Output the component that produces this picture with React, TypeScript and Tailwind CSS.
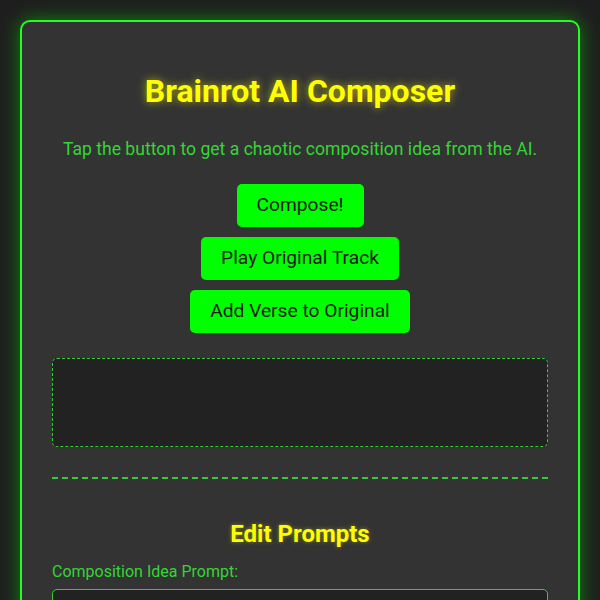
import React from "react";

export default function App() {
  return (
    <div className="min-h-[600px] bg-[#1e1e1e] p-5 font-['Roboto',sans-serif]">
      <div className="rounded-[10px] border-2 border-[#22ff22] bg-[#333333] px-[30px] pt-[30px] pb-10 shadow-[0_0_20px_rgba(0,255,0,0.45)]">
        <h1 className="mt-[21px] text-center text-[32px] font-bold leading-[37px] text-[#ffff00] [text-shadow:0_0_8px_rgba(255,255,0,0.6)]">
          Brainrot AI Composer
        </h1>
        <p className="mt-[29px] text-center text-[17.6px] leading-[21px] text-[#33d633]">
          Tap the button to get a chaotic composition idea from the AI.
        </p>
        <div className="mt-[24px] flex flex-col items-center gap-[10px]">
          <button className="h-[43px] rounded-[5px] bg-[#00ff00] px-5 text-[19.2px] text-[#1a1a1a]">
            Compose!
          </button>
          <button className="h-[43px] rounded-[5px] bg-[#00ff00] px-5 text-[19.2px] text-[#1a1a1a]">
            Play Original Track
          </button>
          <button className="h-[43px] rounded-[5px] bg-[#00ff00] px-5 text-[19.2px] text-[#1a1a1a]">
            Add Verse to Original
          </button>
        </div>
        <div className="mt-[25px] h-[89px] rounded-[5px] border border-dashed border-[#32cd32] bg-[#222222]"></div>
        <div className="mt-[30px] border-t-2 border-dashed border-[#32cd32]"></div>
        <h2 className="mt-[41px] text-center text-[24px] font-bold leading-[28px] text-[#ffff00] [text-shadow:0_0_4px_rgba(255,255,0,0.4)]">
          Edit Prompts
        </h2>
        <label className="mt-[14px] block text-[16px] leading-[19px] text-[#33d633]">
          Composition Idea Prompt:
        </label>
        <div className="mt-[8px] h-[100px] rounded-[5px] border border-[#32cd32] bg-[#222222]"></div>
      </div>
    </div>
  );
}
